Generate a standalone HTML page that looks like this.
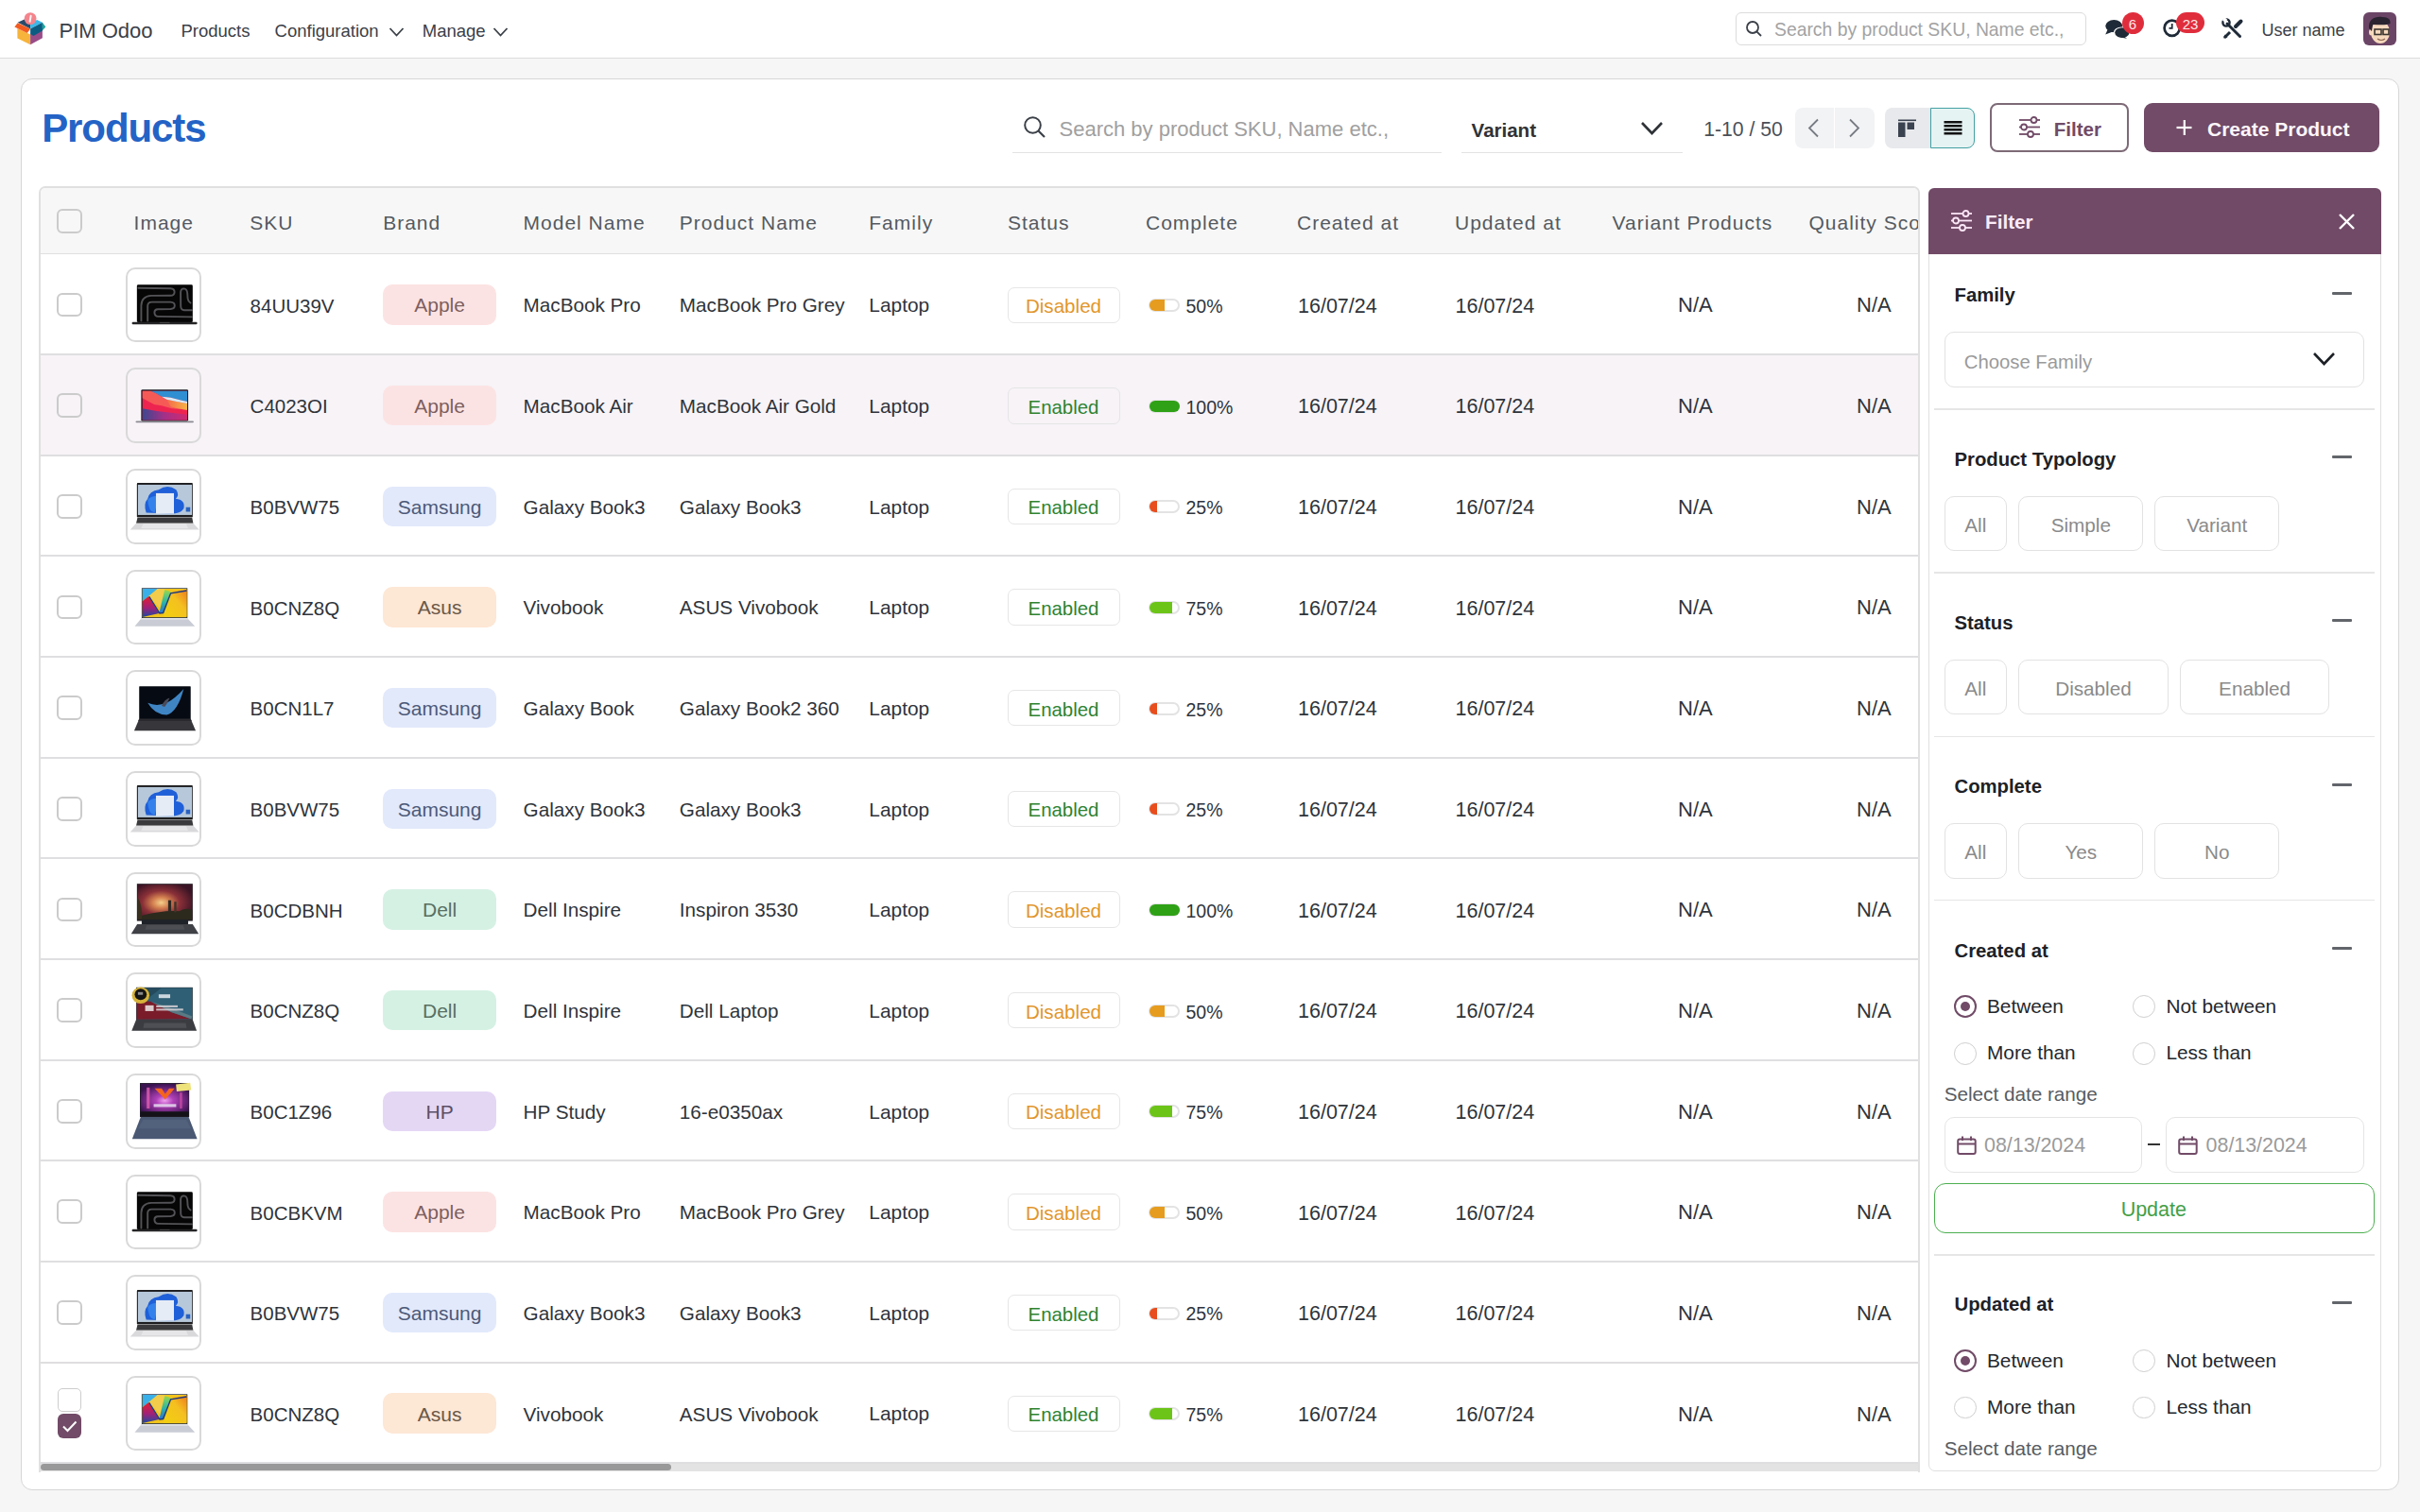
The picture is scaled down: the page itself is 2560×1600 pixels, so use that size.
<!DOCTYPE html>
<html><head><meta charset="utf-8"><title>PIM Odoo - Products</title>
<style>
html,body{margin:0;padding:0;width:2560px;height:1600px;overflow:hidden;background:#f6f6f6;font-family:"Liberation Sans",sans-serif;}
.t{position:absolute;white-space:nowrap;}
svg{overflow:visible}
@media (max-width:2000px){body{zoom:0.5}}
</style></head><body>
<div style="position:absolute;left:0.00px;top:0.00px;width:2560.00px;height:61.50px;box-sizing:border-box;background:#fff;border-bottom:1.5px solid #dcdcdc"></div>
<svg style="position:absolute;left:14.00px;top:11.00px" width="36" height="38" viewBox="0 0 36 38">
<polygon points="4.7,12.7 12.3,9.2 18.1,11.5 18.1,19.4" fill="#2b4a6a"/>
<polygon points="18.1,14 25.1,10.1 30.9,12.7 18.1,19.4" fill="#3cb9ea"/>
<polygon points="4.4,19 18.1,25.5 18.1,36.2 4.4,29.6" fill="#f6b43c"/>
<polygon points="18.1,25 30.9,18.5 30.9,29.3 18.1,36.2" fill="#9a4c88"/>
<polygon points="18.1,19.4 30.9,12.7 30.9,21.5 21.5,27 18.1,25" fill="#0c5c82"/>
<polygon points="30.9,12.7 34.3,17.4 30.9,21.3" fill="#18a79c"/>
<polygon points="4.7,13.2 18.1,19.6 14.8,23.9 1.4,17.4" fill="#f25c22"/>
<circle cx="18.1" cy="8.6" r="6.4" fill="#f4848c"/>
<rect x="17.1" y="4.8" width="2" height="8" rx="1" fill="#fff" opacity=".9" transform="rotate(10 18.1 8.8)"/>
</svg>
<div class="t" style="left:62.50px;top:21.58px;font-size:22px;line-height:22px;color:#3b4048;">PIM Odoo</div>
<div class="t" style="left:191.40px;top:23.54px;font-size:18.5px;line-height:18.5px;color:#3b4048;">Products</div>
<div class="t" style="left:290.60px;top:23.54px;font-size:18.5px;line-height:18.5px;color:#3b4048;">Configuration</div>
<svg style="position:absolute;left:411.00px;top:28.00px" width="17" height="12" viewBox="0 0 17 12"><polyline points="1.5,2 8.5,9.5 15.5,2" fill="none" stroke="#3b4048" stroke-width="1.8"/></svg>
<div class="t" style="left:446.80px;top:23.54px;font-size:18.5px;line-height:18.5px;color:#3b4048;">Manage</div>
<svg style="position:absolute;left:521.00px;top:28.00px" width="17" height="12" viewBox="0 0 17 12"><polyline points="1.5,2 8.5,9.5 15.5,2" fill="none" stroke="#3b4048" stroke-width="1.8"/></svg>
<div style="position:absolute;left:1836.00px;top:13.30px;width:370.50px;height:34.40px;box-sizing:border-box;border:1.5px solid #dcdcdc;border-radius:6px;background:#fff"></div>
<svg style="position:absolute;left:1846.00px;top:21.00px" width="20" height="20" viewBox="0 0 20 20"><circle cx="8" cy="8" r="6" fill="none" stroke="#3b4048" stroke-width="1.8"/><line x1="12.3" y1="12.3" x2="17" y2="17" stroke="#3b4048" stroke-width="1.8"/></svg>
<div class="t" style="left:1877.00px;top:22.12px;font-size:19.35px;line-height:19.35px;color:#a3a3a3;">Search by product SKU, Name etc.,</div>
<svg style="position:absolute;left:2225.00px;top:18.00px" width="30" height="26" viewBox="0 0 30 26">
<ellipse cx="11.3" cy="9.6" rx="9" ry="6.6" fill="#1f2a38"/>
<polygon points="4.5,13.5 2.2,18.6 10,15.6" fill="#1f2a38"/>
<ellipse cx="19.5" cy="16.6" rx="8.8" ry="6.2" fill="#fff"/>
<ellipse cx="19.8" cy="16.6" rx="7.6" ry="5.3" fill="#1f2a38"/>
<polygon points="22,20.5 25,22.8 17.5,21.5" fill="#1f2a38"/>
</svg>
<div style="position:absolute;left:2244.60px;top:12.80px;width:23.00px;height:23.00px;box-sizing:border-box;background:#e02d3c;border-radius:12px"></div>
<div class="t" style="left:2251.84px;top:17.80px;font-size:15px;line-height:15px;color:#fde8ea;">6</div>
<svg style="position:absolute;left:2286.00px;top:18.00px" width="24" height="24" viewBox="0 0 24 24"><circle cx="11.7" cy="11.8" r="8.1" fill="none" stroke="#1f2a38" stroke-width="2.7"/><polyline points="11.7,7 11.7,11.8 8.5,11.8" fill="none" stroke="#1f2a38" stroke-width="1.8"/></svg>
<div style="position:absolute;left:2302.30px;top:13.00px;width:29.40px;height:22.10px;box-sizing:border-box;background:#e02d3c;border-radius:12px"></div>
<div class="t" style="left:2308.68px;top:17.60px;font-size:15px;line-height:15px;color:#fde8ea;">23</div>
<svg style="position:absolute;left:2350.00px;top:19.00px" width="24" height="24" viewBox="0 0 24 24">
<line x1="6" y1="6" x2="19.5" y2="19.5" stroke="#1f2a38" stroke-width="3" stroke-linecap="round"/>
<circle cx="5" cy="5" r="3.6" fill="none" stroke="#1f2a38" stroke-width="2.4"/>
<rect x="1.5" y="0" width="4" height="4" fill="#fff" transform="rotate(45 3.5 2)"/>
<line x1="3" y1="21" x2="9" y2="15" stroke="#1f2a38" stroke-width="3"/>
<polygon points="2.2,21.5 3.5,17.5 6.5,20.5" fill="#1f2a38"/>
<line x1="15" y1="9" x2="20.5" y2="3.5" stroke="#1f2a38" stroke-width="4" stroke-linecap="round"/>
</svg>
<div class="t" style="left:2392.50px;top:23.36px;font-size:18px;line-height:18px;color:#3b4048;">User name</div>
<svg style="position:absolute;left:2500.00px;top:13.00px" width="35" height="35" viewBox="0 0 35 35">
<defs><clipPath id="av"><rect width="35" height="35" rx="6"/></clipPath></defs>
<g clip-path="url(#av)">
<rect width="35" height="35" fill="#6b4566"/>
<ellipse cx="18" cy="21" rx="10" ry="12" fill="#f6d9bd"/>
<ellipse cx="8.5" cy="21" rx="2.5" ry="3.5" fill="#f6d9bd"/>
<path d="M6,17 C5,7 13,4 20,5 C27,5 29,8 28.5,12 C24,14 16,13 10,13 L9,20 Z" fill="#2a2430"/>
<rect x="12" y="18" width="7" height="5.5" fill="none" stroke="#3a3530" stroke-width="1.6"/>
<rect x="21" y="18" width="6" height="5.5" fill="none" stroke="#3a3530" stroke-width="1.6"/>
<path d="M15,28 Q19,31 23,28" fill="none" stroke="#8a6650" stroke-width="1.2"/>
</g>
</svg>
<div style="position:absolute;left:21.50px;top:82.80px;width:2516.70px;height:1494.20px;box-sizing:border-box;background:#fff;border:1.5px solid #d6d6d6;border-radius:12px"></div>
<div class="t" style="left:44.20px;top:115.25px;font-size:42px;line-height:42px;color:#2463c6;font-weight:700;letter-spacing:-1.1px;">Products</div>
<div style="position:absolute;left:1071.00px;top:160.50px;width:454.00px;height:1.50px;box-sizing:border-box;background:#e3e3e3"></div>
<svg style="position:absolute;left:1081.00px;top:121.00px" width="28" height="28" viewBox="0 0 28 28"><circle cx="11.5" cy="11.5" r="8.3" fill="none" stroke="#3b4048" stroke-width="2"/><line x1="17.5" y1="17.5" x2="24" y2="24" stroke="#3b4048" stroke-width="2.2"/></svg>
<div class="t" style="left:1120.50px;top:126.48px;font-size:22px;line-height:22px;color:#a0a0a0;">Search by product SKU, Name etc.,</div>
<div style="position:absolute;left:1546.00px;top:160.50px;width:234.00px;height:1.50px;box-sizing:border-box;background:#e3e3e3"></div>
<div class="t" style="left:1556.60px;top:127.65px;font-size:20.5px;line-height:20.5px;color:#2f3338;font-weight:700;">Variant</div>
<svg style="position:absolute;left:1734.00px;top:127.00px" width="28" height="18" viewBox="0 0 28 18"><polyline points="3,3 13.5,14 24,3" fill="none" stroke="#2f3338" stroke-width="2.6"/></svg>
<div class="t" style="left:1802.20px;top:126.25px;font-size:21.2px;line-height:21.2px;color:#4a4f57;">1-10 / 50</div>
<div style="position:absolute;left:1898.60px;top:114.00px;width:41.40px;height:43.00px;box-sizing:border-box;background:#f2f3f5;border-radius:8px 0 0 8px"></div>
<div style="position:absolute;left:1941.00px;top:114.00px;width:42.40px;height:43.00px;box-sizing:border-box;background:#f2f3f5;border-radius:0 8px 8px 0"></div>
<svg style="position:absolute;left:1910.00px;top:124.00px" width="18" height="24" viewBox="0 0 18 24"><polyline points="13,2.5 4,11.5 13,20.5" fill="none" stroke="#777b82" stroke-width="1.8"/></svg>
<svg style="position:absolute;left:1953.00px;top:124.00px" width="18" height="24" viewBox="0 0 18 24"><polyline points="4,2.5 13,11.5 4,20.5" fill="none" stroke="#777b82" stroke-width="1.8"/></svg>
<div style="position:absolute;left:1993.70px;top:114.00px;width:49.30px;height:43.00px;box-sizing:border-box;background:#e8e9ec;border-radius:8px 0 0 8px"></div>
<div style="position:absolute;left:2042.00px;top:114.00px;width:47.00px;height:43.00px;box-sizing:border-box;background:#e6f3f3;border:1.8px solid #42a0a2;border-radius:0 8px 8px 0"></div>
<svg style="position:absolute;left:2006.00px;top:125.00px" width="22" height="22" viewBox="0 0 22 22"><rect x="2" y="1.5" width="19" height="1.6" fill="#3b4250"/><rect x="2" y="4.5" width="7.5" height="15.5" fill="#3b4250"/><rect x="11.5" y="4.5" width="7.5" height="7.5" fill="#3b4250"/></svg>
<svg style="position:absolute;left:2055.00px;top:126.00px" width="22" height="18" viewBox="0 0 22 18"><rect x="1.5" y="2" width="19" height="2.5" fill="#111"/><rect x="1.5" y="6" width="19" height="2.5" fill="#111"/><rect x="1.5" y="10" width="19" height="2.5" fill="#111"/><rect x="1.5" y="14" width="19" height="2.5" fill="#111"/></svg>
<div style="position:absolute;left:2105.40px;top:108.70px;width:146.30px;height:52.80px;box-sizing:border-box;border:2px solid #7d6a77;border-radius:8px;background:#fff"></div>
<svg style="position:absolute;left:2136.00px;top:122.00px" width="22" height="26" viewBox="0 0 22 26"><line x1="0" y1="5" x2="22" y2="5" stroke="#714b67" stroke-width="1.8"/><circle cx="15.5" cy="5" r="3" fill="#fff" stroke="#714b67" stroke-width="1.8"/>
<line x1="0" y1="12.5" x2="22" y2="12.5" stroke="#714b67" stroke-width="1.8"/><circle cx="5" cy="12.5" r="3" fill="#fff" stroke="#714b67" stroke-width="1.8"/>
<line x1="0" y1="20" x2="22" y2="20" stroke="#714b67" stroke-width="1.8"/><circle cx="12" cy="20" r="3" fill="#fff" stroke="#714b67" stroke-width="1.8"/></svg>
<div class="t" style="left:2172.80px;top:126.85px;font-size:20.5px;line-height:20.5px;color:#714b67;font-weight:700;">Filter</div>
<div style="position:absolute;left:2268.00px;top:108.70px;width:248.80px;height:52.80px;box-sizing:border-box;background:#714b67;border-radius:9px"></div>
<svg style="position:absolute;left:2301.00px;top:125.00px" width="20" height="20" viewBox="0 0 20 20"><rect x="8.7" y="2" width="2.2" height="16" fill="#fff"/><rect x="1.5" y="8.9" width="16" height="2.2" fill="#fff"/></svg>
<div class="t" style="left:2335.00px;top:126.42px;font-size:21px;line-height:21px;color:#fdf6fb;font-weight:700;">Create Product</div>
<div style="position:absolute;left:41px;top:197px;width:1990px;height:1361px;box-sizing:border-box;border:2px solid #e0e0e0;border-bottom:none;border-radius:7px 7px 0 0;overflow:hidden;background:#fff">
<div style="position:absolute;left:-43px;top:-199px;width:2560px;height:1600px">
<div style="position:absolute;left:0.00px;top:197.00px;width:2560.00px;height:72.30px;box-sizing:border-box;background:#f7f7f7;border-bottom:1.6px solid #e0e0e0"></div>
<div style="position:absolute;left:60.30px;top:220.70px;width:26.30px;height:26.30px;box-sizing:border-box;border:2px solid #cbcbcb;border-radius:6px"></div>
<div class="t" style="left:141.60px;top:225.12px;font-size:21px;line-height:21px;color:#545a60;letter-spacing:1px;">Image</div>
<div class="t" style="left:264.30px;top:225.12px;font-size:21px;line-height:21px;color:#545a60;letter-spacing:1px;">SKU</div>
<div class="t" style="left:405.20px;top:225.12px;font-size:21px;line-height:21px;color:#545a60;letter-spacing:1px;">Brand</div>
<div class="t" style="left:553.60px;top:225.12px;font-size:21px;line-height:21px;color:#545a60;letter-spacing:1px;">Model Name</div>
<div class="t" style="left:718.80px;top:225.12px;font-size:21px;line-height:21px;color:#545a60;letter-spacing:1px;">Product Name</div>
<div class="t" style="left:919.30px;top:225.12px;font-size:21px;line-height:21px;color:#545a60;letter-spacing:1px;">Family</div>
<div class="t" style="left:1066.00px;top:225.12px;font-size:21px;line-height:21px;color:#545a60;letter-spacing:1px;">Status</div>
<div class="t" style="left:1212.00px;top:225.12px;font-size:21px;line-height:21px;color:#545a60;letter-spacing:1px;">Complete</div>
<div class="t" style="left:1372.00px;top:225.12px;font-size:21px;line-height:21px;color:#545a60;letter-spacing:1px;">Created at</div>
<div class="t" style="left:1539.00px;top:225.12px;font-size:21px;line-height:21px;color:#545a60;letter-spacing:1px;">Updated at</div>
<div class="t" style="left:1705.60px;top:225.12px;font-size:21px;line-height:21px;color:#545a60;letter-spacing:1px;">Variant Products</div>
<div class="t" style="left:1913.50px;top:225.12px;font-size:21px;line-height:21px;color:#545a60;letter-spacing:1px;">Quality Score</div>
<div style="position:absolute;left:0.00px;top:269.50px;width:2560.00px;height:106.65px;box-sizing:border-box;background:#fff;border-bottom:2px solid #dfdee0"></div>
<div style="position:absolute;left:60.30px;top:309.60px;width:26.30px;height:25.90px;box-sizing:border-box;border:2px solid #cbcbcb;border-radius:6px;background:transparent"></div>
<div style="position:absolute;left:133.30px;top:282.80px;width:79.50px;height:79.50px;box-sizing:border-box;border:2px solid #d9d9d9;border-radius:10px;background:#fff"></div>
<svg style="position:absolute;left:133.60px;top:283.00px" width="79" height="79" viewBox="0 0 79 79">
<rect x="10.85" y="18.25" width="58.99" height="39.79" rx="1.4" fill="#060606"/>
<g fill="none" stroke="#58585c" stroke-width="1.9" stroke-linecap="round" opacity=".95">
<path d="M12.4,21.8 L46.4,22.2 Q50.6,22.4 50.6,26 Q50.6,29.8 46.2,29.8 L26,29.9 Q15.6,30.4 15.4,40.5 L15.4,56.5"/>
<path d="M22.2,56.5 L22.2,40.4 Q22.4,36.6 26.6,36.6 L46.4,36.6 Q50.8,36.8 50.8,40.2 Q50.8,43.8 46.4,44 L32.8,44.3 Q29.4,44.4 29.4,47.8 Q29.6,51.8 33.2,51.9 L69,52.4"/>
<path d="M69,45.2 L61,45.2 Q57.3,45 57.2,41 L57.1,26.4 Q57.3,22.4 60.5,22.4 Q63.7,22.6 64.2,27 L64.6,32.8 Q65,36 67.5,37.5"/>
</g>
<rect x="5.56" y="57.78" width="69.05" height="2.54" rx="1.2" fill="#252527"/>
<rect x="34.92" y="57.94" width="10.58" height="0.74" fill="#555"/>
</svg>
<div class="t" style="left:264.60px;top:313.65px;font-size:20.5px;line-height:20.5px;color:#2f343a;">84UU39V</div>
<div style="position:absolute;left:405.20px;top:301.30px;width:119.80px;height:42.50px;box-sizing:border-box;background:#fce3e3;border-radius:10px"></div>
<div class="t" style="left:438.22px;top:312.42px;font-size:21px;line-height:21px;color:#7d5f60;">Apple</div>
<div class="t" style="left:553.60px;top:313.48px;font-size:20.7px;line-height:20.7px;color:#2f343a;">MacBook Pro</div>
<div class="t" style="left:718.80px;top:313.48px;font-size:20.7px;line-height:20.7px;color:#2f343a;">MacBook Pro Grey</div>
<div class="t" style="left:919.30px;top:313.31px;font-size:20.9px;line-height:20.9px;color:#2f343a;">Laptop</div>
<div style="position:absolute;left:1065.50px;top:303.50px;width:119.00px;height:38.40px;box-sizing:border-box;border:1.8px solid #e6e6e6;border-radius:7px;background:transparent"></div>
<div class="t" style="left:1084.93px;top:313.96px;font-size:20.6px;line-height:20.6px;color:#e2962a;">Disabled</div>
<div style="position:absolute;left:1215.00px;top:316.10px;width:33.30px;height:14.10px;box-sizing:border-box;border:2px solid #e3e3e3;border-radius:7px;background:#fff"></div>
<div style="position:absolute;left:1215.50px;top:317.10px;width:16.65px;height:12.00px;box-sizing:border-box;background:#e69c1e;border-radius:6px 0 0 6px"></div>
<div class="t" style="left:1254.50px;top:314.99px;font-size:19.5px;line-height:19.5px;color:#2f343a;">50%</div>
<div class="t" style="left:1373.00px;top:313.80px;font-size:21.5px;line-height:21.5px;color:#2f343a;">16/07/24</div>
<div class="t" style="left:1539.50px;top:313.80px;font-size:21.5px;line-height:21.5px;color:#2f343a;">16/07/24</div>
<div class="t" style="left:1775.00px;top:312.38px;font-size:22px;line-height:22px;color:#2f343a;">N/A</div>
<div class="t" style="left:1964.00px;top:312.38px;font-size:22px;line-height:22px;color:#2f343a;">N/A</div>
<div style="position:absolute;left:0.00px;top:376.15px;width:2560.00px;height:106.65px;box-sizing:border-box;background:#f7f3f7;border-bottom:2px solid #dfdee0"></div>
<div style="position:absolute;left:60.30px;top:416.25px;width:26.30px;height:25.90px;box-sizing:border-box;border:2px solid #cbcbcb;border-radius:6px;background:transparent"></div>
<div style="position:absolute;left:133.30px;top:389.45px;width:79.50px;height:79.50px;box-sizing:border-box;border:2px solid #d9d9d9;border-radius:10px;background:#f7f3f7"></div>
<svg style="position:absolute;left:133.60px;top:389.65px" width="79" height="79" viewBox="0 0 79 79">
<defs>
<linearGradient id="mbaB" x1="0" y1="0" x2="1" y2="0"><stop offset="0" stop-color="#3d4790"/><stop offset=".5" stop-color="#a53088"/><stop offset="1" stop-color="#d02a70"/></linearGradient>
<linearGradient id="mbaO" x1="0" y1="0" x2="1" y2="0"><stop offset="0" stop-color="#f46a4a"/><stop offset="1" stop-color="#f6b446"/></linearGradient>
</defs>
<rect x="15.34" y="22.22" width="49.74" height="33.44" rx="1.4" fill="#1b1b22"/>
<polygon points="16.72,23.81 64.02,23.81 64.02,54.50 16.72,54.50" fill="#ee2450"/>
<polygon points="16.72,23.81 25.40,23.81 31.75,26.46 37.04,29.63 42.33,32.80 52.91,34.92 64.02,37.04 64.02,43.39 47.62,42.33 37.04,39.15 29.10,38.10 17.46,31.75 16.72,31.22" fill="#f65a56"/>
<polygon points="42.33,32.80 52.91,34.92 64.02,37.04 64.02,43.92 51.85,41.80 46.56,40.21" fill="url(#mbaO)"/>
<polygon points="25.40,23.81 64.02,23.81 64.02,34.92 58.20,33.86 46.56,30.69 37.04,29.63 31.75,26.46" fill="#2f8fd2"/>
<polygon points="37.04,29.63 46.56,30.69 58.20,33.86 64.02,34.92 64.02,37.04 52.91,34.92 42.33,32.80" fill="#d8ecf8"/>
<polygon points="16.72,42.33 31.75,44.97 44.97,46.56 64.02,48.68 64.02,54.50 16.72,54.50" fill="url(#mbaB)"/>
<rect x="9.52" y="55.45" width="61.38" height="1.80" rx="0.9" fill="#8c8b92"/>
</svg>
<div class="t" style="left:264.60px;top:420.30px;font-size:20.5px;line-height:20.5px;color:#2f343a;">C4023OI</div>
<div style="position:absolute;left:405.20px;top:407.95px;width:119.80px;height:42.50px;box-sizing:border-box;background:#fce3e3;border-radius:10px"></div>
<div class="t" style="left:438.22px;top:419.07px;font-size:21px;line-height:21px;color:#7d5f60;">Apple</div>
<div class="t" style="left:553.60px;top:420.13px;font-size:20.7px;line-height:20.7px;color:#2f343a;">MacBook Air</div>
<div class="t" style="left:718.80px;top:420.13px;font-size:20.7px;line-height:20.7px;color:#2f343a;">MacBook Air Gold</div>
<div class="t" style="left:919.30px;top:419.96px;font-size:20.9px;line-height:20.9px;color:#2f343a;">Laptop</div>
<div style="position:absolute;left:1065.50px;top:410.15px;width:119.00px;height:38.40px;box-sizing:border-box;border:1.8px solid #e6e6e6;border-radius:7px;background:transparent"></div>
<div class="t" style="left:1087.57px;top:420.78px;font-size:20.4px;line-height:20.4px;color:#2e8331;">Enabled</div>
<div style="position:absolute;left:1215.00px;top:422.75px;width:33.30px;height:14.10px;box-sizing:border-box;border:2px solid #e3e3e3;border-radius:7px;background:#fff"></div>
<div style="position:absolute;left:1215.50px;top:423.75px;width:32.80px;height:12.00px;box-sizing:border-box;background:#2fa116;border-radius:7px"></div>
<div class="t" style="left:1254.50px;top:421.64px;font-size:19.5px;line-height:19.5px;color:#2f343a;">100%</div>
<div class="t" style="left:1373.00px;top:420.45px;font-size:21.5px;line-height:21.5px;color:#2f343a;">16/07/24</div>
<div class="t" style="left:1539.50px;top:420.45px;font-size:21.5px;line-height:21.5px;color:#2f343a;">16/07/24</div>
<div class="t" style="left:1775.00px;top:419.03px;font-size:22px;line-height:22px;color:#2f343a;">N/A</div>
<div class="t" style="left:1964.00px;top:419.03px;font-size:22px;line-height:22px;color:#2f343a;">N/A</div>
<div style="position:absolute;left:0.00px;top:482.80px;width:2560.00px;height:106.65px;box-sizing:border-box;background:#fff;border-bottom:2px solid #dfdee0"></div>
<div style="position:absolute;left:60.30px;top:522.90px;width:26.30px;height:25.90px;box-sizing:border-box;border:2px solid #cbcbcb;border-radius:6px;background:transparent"></div>
<div style="position:absolute;left:133.30px;top:496.10px;width:79.50px;height:79.50px;box-sizing:border-box;border:2px solid #d9d9d9;border-radius:10px;background:#fff"></div>
<svg style="position:absolute;left:133.60px;top:496.30px" width="79" height="79" viewBox="0 0 79 79">
<rect x="10.85" y="15.08" width="58.99" height="36.51" rx="0.8" fill="#1d1d1f"/>
<rect x="11.90" y="16.93" width="57.14" height="32.01" fill="#b6c8da"/>
<path d="M20.63,46.56 Q17.46,37.04 22.22,31.75 Q23.81,23.28 33.86,22.22 Q43.39,15.87 52.38,22.22 Q56.08,28.04 51.85,31.75 Q62.43,32.80 60.32,42.33 Q57.14,47.62 46.56,47.62 Z" fill="#1f5fd8"/>
<path d="M22.22,32.80 Q27.51,27.51 33.86,29.63 L29.63,46.56 Q22.75,45.50 22.22,32.80 Z" fill="#3a8af0" opacity=".8"/>
<rect x="30.95" y="25.93" width="19.05" height="21.69" fill="#e6ecf6"/>
<rect x="62.70" y="40.74" width="4.50" height="4.76" fill="#2a62c0"/>
<polygon points="11.38,52.12 69.31,52.12 70.37,57.67 10.05,57.67" fill="#3a3a3c"/>
<polygon points="10.05,57.67 70.37,57.67 76.72,64.55 3.70,64.55" fill="#d9d9dc"/>
<polygon points="17.46,58.20 62.96,58.20 65.08,62.96 15.34,62.96" fill="#e6e6e8"/>
</svg>
<div class="t" style="left:264.60px;top:526.95px;font-size:20.5px;line-height:20.5px;color:#2f343a;">B0BVW75</div>
<div style="position:absolute;left:405.20px;top:514.60px;width:119.80px;height:42.50px;box-sizing:border-box;background:#e2e9fb;border-radius:10px"></div>
<div class="t" style="left:420.74px;top:525.72px;font-size:21px;line-height:21px;color:#4d5a78;">Samsung</div>
<div class="t" style="left:553.60px;top:526.78px;font-size:20.7px;line-height:20.7px;color:#2f343a;">Galaxy Book3</div>
<div class="t" style="left:718.80px;top:526.78px;font-size:20.7px;line-height:20.7px;color:#2f343a;">Galaxy Book3</div>
<div class="t" style="left:919.30px;top:526.61px;font-size:20.9px;line-height:20.9px;color:#2f343a;">Laptop</div>
<div style="position:absolute;left:1065.50px;top:516.80px;width:119.00px;height:38.40px;box-sizing:border-box;border:1.8px solid #e6e6e6;border-radius:7px;background:transparent"></div>
<div class="t" style="left:1087.57px;top:527.43px;font-size:20.4px;line-height:20.4px;color:#2e8331;">Enabled</div>
<div style="position:absolute;left:1215.00px;top:529.40px;width:33.30px;height:14.10px;box-sizing:border-box;border:2px solid #e3e3e3;border-radius:7px;background:#fff"></div>
<div style="position:absolute;left:1215.50px;top:530.40px;width:8.33px;height:12.00px;box-sizing:border-box;background:#e84d1d;border-radius:6px 0 0 6px"></div>
<div class="t" style="left:1254.50px;top:528.29px;font-size:19.5px;line-height:19.5px;color:#2f343a;">25%</div>
<div class="t" style="left:1373.00px;top:527.10px;font-size:21.5px;line-height:21.5px;color:#2f343a;">16/07/24</div>
<div class="t" style="left:1539.50px;top:527.10px;font-size:21.5px;line-height:21.5px;color:#2f343a;">16/07/24</div>
<div class="t" style="left:1775.00px;top:525.68px;font-size:22px;line-height:22px;color:#2f343a;">N/A</div>
<div class="t" style="left:1964.00px;top:525.68px;font-size:22px;line-height:22px;color:#2f343a;">N/A</div>
<div style="position:absolute;left:0.00px;top:589.45px;width:2560.00px;height:106.65px;box-sizing:border-box;background:#fff;border-bottom:2px solid #dfdee0"></div>
<div style="position:absolute;left:60.30px;top:629.55px;width:26.30px;height:25.90px;box-sizing:border-box;border:2px solid #cbcbcb;border-radius:6px;background:transparent"></div>
<div style="position:absolute;left:133.30px;top:602.75px;width:79.50px;height:79.50px;box-sizing:border-box;border:2px solid #d9d9d9;border-radius:10px;background:#fff"></div>
<svg style="position:absolute;left:133.60px;top:602.95px" width="79" height="79" viewBox="0 0 79 79">
<defs>
<linearGradient id="vRed" x1="0" y1="0" x2="0" y2="1"><stop offset="0" stop-color="#e81c2a"/><stop offset=".55" stop-color="#a0207a"/><stop offset="1" stop-color="#1e4aa0"/></linearGradient>
<linearGradient id="vGrn" x1="0" y1="0" x2="0" y2="1"><stop offset="0" stop-color="#9ad84a"/><stop offset=".5" stop-color="#30b8a0"/><stop offset="1" stop-color="#2a70d0"/></linearGradient>
<linearGradient id="vYel" x1="1" y1="0" x2="0" y2="1"><stop offset="0" stop-color="#f07a1e"/><stop offset=".4" stop-color="#f4c020"/><stop offset="1" stop-color="#f2d00e"/></linearGradient>
</defs>
<rect x="15.87" y="19.31" width="48.41" height="31.75" fill="#1d2a40"/>
<polygon points="16.72,20.11 63.49,20.11 63.49,50.26 16.72,50.26" fill="#f2c41a"/>
<polygon points="16.72,20.11 32.80,20.11 23.28,28.04 16.72,33.33" fill="#3ab0ea"/>
<polygon points="23.28,28.04 32.80,20.11 41.27,20.63 34.92,40.21" fill="#f2cc4a"/>
<polygon points="16.72,33.33 23.28,28.04 34.39,46.03 16.72,50.00" fill="url(#vRed)"/>
<polygon points="40.21,20.90 48.15,23.81 39.15,45.50 34.39,46.03" fill="url(#vGrn)"/>
<polygon points="46.56,23.28 63.49,20.90 63.49,49.47 39.68,50.00 38.89,44.97" fill="url(#vYel)"/>
<polyline points="23.81,28.31 34.92,46.03 38.62,45.50 46.56,24.87 63.49,21.96" fill="none" stroke="#1b3a80" stroke-width="1.4"/>
<polygon points="15.87,51.06 64.02,51.06 72.22,59.79 8.47,59.79" fill="#c9ccd4"/>
<polygon points="15.87,51.06 64.02,51.06 65.08,52.65 14.81,52.65" fill="#dfe2e8"/>
</svg>
<div class="t" style="left:264.60px;top:633.60px;font-size:20.5px;line-height:20.5px;color:#2f343a;">B0CNZ8Q</div>
<div style="position:absolute;left:405.20px;top:621.25px;width:119.80px;height:42.50px;box-sizing:border-box;background:#fde7d5;border-radius:10px"></div>
<div class="t" style="left:441.74px;top:632.37px;font-size:21px;line-height:21px;color:#6b5847;">Asus</div>
<div class="t" style="left:553.60px;top:633.43px;font-size:20.7px;line-height:20.7px;color:#2f343a;">Vivobook</div>
<div class="t" style="left:718.80px;top:633.43px;font-size:20.7px;line-height:20.7px;color:#2f343a;">ASUS Vivobook</div>
<div class="t" style="left:919.30px;top:633.26px;font-size:20.9px;line-height:20.9px;color:#2f343a;">Laptop</div>
<div style="position:absolute;left:1065.50px;top:623.45px;width:119.00px;height:38.40px;box-sizing:border-box;border:1.8px solid #e6e6e6;border-radius:7px;background:transparent"></div>
<div class="t" style="left:1087.57px;top:634.08px;font-size:20.4px;line-height:20.4px;color:#2e8331;">Enabled</div>
<div style="position:absolute;left:1215.00px;top:636.05px;width:33.30px;height:14.10px;box-sizing:border-box;border:2px solid #e3e3e3;border-radius:7px;background:#fff"></div>
<div style="position:absolute;left:1215.50px;top:637.05px;width:24.97px;height:12.00px;box-sizing:border-box;background:#6cc419;border-radius:6px 0 0 6px"></div>
<div class="t" style="left:1254.50px;top:634.94px;font-size:19.5px;line-height:19.5px;color:#2f343a;">75%</div>
<div class="t" style="left:1373.00px;top:633.75px;font-size:21.5px;line-height:21.5px;color:#2f343a;">16/07/24</div>
<div class="t" style="left:1539.50px;top:633.75px;font-size:21.5px;line-height:21.5px;color:#2f343a;">16/07/24</div>
<div class="t" style="left:1775.00px;top:632.33px;font-size:22px;line-height:22px;color:#2f343a;">N/A</div>
<div class="t" style="left:1964.00px;top:632.33px;font-size:22px;line-height:22px;color:#2f343a;">N/A</div>
<div style="position:absolute;left:0.00px;top:696.10px;width:2560.00px;height:106.65px;box-sizing:border-box;background:#fff;border-bottom:2px solid #dfdee0"></div>
<div style="position:absolute;left:60.30px;top:736.20px;width:26.30px;height:25.90px;box-sizing:border-box;border:2px solid #cbcbcb;border-radius:6px;background:transparent"></div>
<div style="position:absolute;left:133.30px;top:709.40px;width:79.50px;height:79.50px;box-sizing:border-box;border:2px solid #d9d9d9;border-radius:10px;background:#fff"></div>
<svg style="position:absolute;left:133.60px;top:709.60px" width="79" height="79" viewBox="0 0 79 79">
<rect x="13.23" y="16.14" width="54.50" height="34.92" rx="0.6" fill="#060a12"/>
<path d="M22.22,33.86 Q29.63,46.56 42.33,46.56 Q53.97,43.39 60.32,19.05 Q50.79,29.63 42.33,33.86 Q31.75,38.10 22.22,33.86 Z" fill="#3f85c4"/>
<path d="M37.04,37.04 Q40.21,29.63 45.50,28.57 Q43.39,33.86 40.21,38.10 Z" fill="#4a4a58"/>
<polygon points="13.23,50.79 67.72,50.79 73.02,63.23 7.94,63.23" fill="#37373b"/>
<polygon points="13.23,50.79 67.72,50.79 68.78,52.91 12.17,52.91" fill="#2a2a2e"/>
</svg>
<div class="t" style="left:264.60px;top:740.25px;font-size:20.5px;line-height:20.5px;color:#2f343a;">B0CN1L7</div>
<div style="position:absolute;left:405.20px;top:727.90px;width:119.80px;height:42.50px;box-sizing:border-box;background:#e2e9fb;border-radius:10px"></div>
<div class="t" style="left:420.74px;top:739.02px;font-size:21px;line-height:21px;color:#4d5a78;">Samsung</div>
<div class="t" style="left:553.60px;top:740.08px;font-size:20.7px;line-height:20.7px;color:#2f343a;">Galaxy Book</div>
<div class="t" style="left:718.80px;top:740.08px;font-size:20.7px;line-height:20.7px;color:#2f343a;">Galaxy Book2 360</div>
<div class="t" style="left:919.30px;top:739.91px;font-size:20.9px;line-height:20.9px;color:#2f343a;">Laptop</div>
<div style="position:absolute;left:1065.50px;top:730.10px;width:119.00px;height:38.40px;box-sizing:border-box;border:1.8px solid #e6e6e6;border-radius:7px;background:transparent"></div>
<div class="t" style="left:1087.57px;top:740.73px;font-size:20.4px;line-height:20.4px;color:#2e8331;">Enabled</div>
<div style="position:absolute;left:1215.00px;top:742.70px;width:33.30px;height:14.10px;box-sizing:border-box;border:2px solid #e3e3e3;border-radius:7px;background:#fff"></div>
<div style="position:absolute;left:1215.50px;top:743.70px;width:8.33px;height:12.00px;box-sizing:border-box;background:#e84d1d;border-radius:6px 0 0 6px"></div>
<div class="t" style="left:1254.50px;top:741.59px;font-size:19.5px;line-height:19.5px;color:#2f343a;">25%</div>
<div class="t" style="left:1373.00px;top:740.40px;font-size:21.5px;line-height:21.5px;color:#2f343a;">16/07/24</div>
<div class="t" style="left:1539.50px;top:740.40px;font-size:21.5px;line-height:21.5px;color:#2f343a;">16/07/24</div>
<div class="t" style="left:1775.00px;top:738.98px;font-size:22px;line-height:22px;color:#2f343a;">N/A</div>
<div class="t" style="left:1964.00px;top:738.98px;font-size:22px;line-height:22px;color:#2f343a;">N/A</div>
<div style="position:absolute;left:0.00px;top:802.75px;width:2560.00px;height:106.65px;box-sizing:border-box;background:#fff;border-bottom:2px solid #dfdee0"></div>
<div style="position:absolute;left:60.30px;top:842.85px;width:26.30px;height:25.90px;box-sizing:border-box;border:2px solid #cbcbcb;border-radius:6px;background:transparent"></div>
<div style="position:absolute;left:133.30px;top:816.05px;width:79.50px;height:79.50px;box-sizing:border-box;border:2px solid #d9d9d9;border-radius:10px;background:#fff"></div>
<svg style="position:absolute;left:133.60px;top:816.25px" width="79" height="79" viewBox="0 0 79 79">
<rect x="10.85" y="15.08" width="58.99" height="36.51" rx="0.8" fill="#1d1d1f"/>
<rect x="11.90" y="16.93" width="57.14" height="32.01" fill="#b6c8da"/>
<path d="M20.63,46.56 Q17.46,37.04 22.22,31.75 Q23.81,23.28 33.86,22.22 Q43.39,15.87 52.38,22.22 Q56.08,28.04 51.85,31.75 Q62.43,32.80 60.32,42.33 Q57.14,47.62 46.56,47.62 Z" fill="#1f5fd8"/>
<path d="M22.22,32.80 Q27.51,27.51 33.86,29.63 L29.63,46.56 Q22.75,45.50 22.22,32.80 Z" fill="#3a8af0" opacity=".8"/>
<rect x="30.95" y="25.93" width="19.05" height="21.69" fill="#e6ecf6"/>
<rect x="62.70" y="40.74" width="4.50" height="4.76" fill="#2a62c0"/>
<polygon points="11.38,52.12 69.31,52.12 70.37,57.67 10.05,57.67" fill="#3a3a3c"/>
<polygon points="10.05,57.67 70.37,57.67 76.72,64.55 3.70,64.55" fill="#d9d9dc"/>
<polygon points="17.46,58.20 62.96,58.20 65.08,62.96 15.34,62.96" fill="#e6e6e8"/>
</svg>
<div class="t" style="left:264.60px;top:846.90px;font-size:20.5px;line-height:20.5px;color:#2f343a;">B0BVW75</div>
<div style="position:absolute;left:405.20px;top:834.55px;width:119.80px;height:42.50px;box-sizing:border-box;background:#e2e9fb;border-radius:10px"></div>
<div class="t" style="left:420.74px;top:845.67px;font-size:21px;line-height:21px;color:#4d5a78;">Samsung</div>
<div class="t" style="left:553.60px;top:846.73px;font-size:20.7px;line-height:20.7px;color:#2f343a;">Galaxy Book3</div>
<div class="t" style="left:718.80px;top:846.73px;font-size:20.7px;line-height:20.7px;color:#2f343a;">Galaxy Book3</div>
<div class="t" style="left:919.30px;top:846.56px;font-size:20.9px;line-height:20.9px;color:#2f343a;">Laptop</div>
<div style="position:absolute;left:1065.50px;top:836.75px;width:119.00px;height:38.40px;box-sizing:border-box;border:1.8px solid #e6e6e6;border-radius:7px;background:transparent"></div>
<div class="t" style="left:1087.57px;top:847.38px;font-size:20.4px;line-height:20.4px;color:#2e8331;">Enabled</div>
<div style="position:absolute;left:1215.00px;top:849.35px;width:33.30px;height:14.10px;box-sizing:border-box;border:2px solid #e3e3e3;border-radius:7px;background:#fff"></div>
<div style="position:absolute;left:1215.50px;top:850.35px;width:8.33px;height:12.00px;box-sizing:border-box;background:#e84d1d;border-radius:6px 0 0 6px"></div>
<div class="t" style="left:1254.50px;top:848.24px;font-size:19.5px;line-height:19.5px;color:#2f343a;">25%</div>
<div class="t" style="left:1373.00px;top:847.05px;font-size:21.5px;line-height:21.5px;color:#2f343a;">16/07/24</div>
<div class="t" style="left:1539.50px;top:847.05px;font-size:21.5px;line-height:21.5px;color:#2f343a;">16/07/24</div>
<div class="t" style="left:1775.00px;top:845.63px;font-size:22px;line-height:22px;color:#2f343a;">N/A</div>
<div class="t" style="left:1964.00px;top:845.63px;font-size:22px;line-height:22px;color:#2f343a;">N/A</div>
<div style="position:absolute;left:0.00px;top:909.40px;width:2560.00px;height:106.65px;box-sizing:border-box;background:#fff;border-bottom:2px solid #dfdee0"></div>
<div style="position:absolute;left:60.30px;top:949.50px;width:26.30px;height:25.90px;box-sizing:border-box;border:2px solid #cbcbcb;border-radius:6px;background:transparent"></div>
<div style="position:absolute;left:133.30px;top:922.70px;width:79.50px;height:79.50px;box-sizing:border-box;border:2px solid #d9d9d9;border-radius:10px;background:#fff"></div>
<svg style="position:absolute;left:133.60px;top:922.90px" width="79" height="79" viewBox="0 0 79 79">
<defs><radialGradient id="d1g" cx=".43" cy=".52" r=".62"><stop offset="0" stop-color="#f4d08a"/><stop offset=".25" stop-color="#d48050"/><stop offset=".55" stop-color="#8a3038"/><stop offset="1" stop-color="#3a1424"/></radialGradient></defs>
<rect x="10.85" y="12.17" width="58.99" height="39.42" fill="#241e24"/>
<rect x="11.64" y="12.96" width="57.67" height="37.04" fill="url(#d1g)"/>
<path d="M11.64,47.62 Q23.81,43.39 34.39,42.33 Q44.97,40.21 55.56,41.27 Q63.49,37.04 69.31,40.21 L69.31,50.00 L11.64,50.00 Z" fill="#2c2a1c"/>
<path d="M11.64,26.46 Q16.93,34.39 15.87,49.74 L11.64,49.74 Z" fill="#3a3020"/>
<rect x="43.92" y="29.63" width="3.17" height="12.70" fill="#2e2a24"/>
<rect x="50.26" y="31.22" width="2.38" height="11.11" fill="#403428"/>
<polygon points="15.87,50.00 65.08,50.00 65.08,55.56 15.87,55.56" fill="#1f2329"/>
<polygon points="11.11,55.03 69.84,55.03 76.19,65.34 4.76,65.34" fill="#3f4147"/>
<polygon points="21.16,56.08 59.79,56.08 61.38,60.85 19.58,60.85" fill="#4c4e54"/>
</svg>
<div class="t" style="left:264.60px;top:953.55px;font-size:20.5px;line-height:20.5px;color:#2f343a;">B0CDBNH</div>
<div style="position:absolute;left:405.20px;top:941.20px;width:119.80px;height:42.50px;box-sizing:border-box;background:#d5f1e4;border-radius:10px"></div>
<div class="t" style="left:446.99px;top:952.32px;font-size:21px;line-height:21px;color:#586f63;">Dell</div>
<div class="t" style="left:553.60px;top:953.38px;font-size:20.7px;line-height:20.7px;color:#2f343a;">Dell Inspire</div>
<div class="t" style="left:718.80px;top:953.38px;font-size:20.7px;line-height:20.7px;color:#2f343a;">Inspiron 3530</div>
<div class="t" style="left:919.30px;top:953.21px;font-size:20.9px;line-height:20.9px;color:#2f343a;">Laptop</div>
<div style="position:absolute;left:1065.50px;top:943.40px;width:119.00px;height:38.40px;box-sizing:border-box;border:1.8px solid #e6e6e6;border-radius:7px;background:transparent"></div>
<div class="t" style="left:1084.93px;top:953.86px;font-size:20.6px;line-height:20.6px;color:#e2962a;">Disabled</div>
<div style="position:absolute;left:1215.00px;top:956.00px;width:33.30px;height:14.10px;box-sizing:border-box;border:2px solid #e3e3e3;border-radius:7px;background:#fff"></div>
<div style="position:absolute;left:1215.50px;top:957.00px;width:32.80px;height:12.00px;box-sizing:border-box;background:#2fa116;border-radius:7px"></div>
<div class="t" style="left:1254.50px;top:954.89px;font-size:19.5px;line-height:19.5px;color:#2f343a;">100%</div>
<div class="t" style="left:1373.00px;top:953.70px;font-size:21.5px;line-height:21.5px;color:#2f343a;">16/07/24</div>
<div class="t" style="left:1539.50px;top:953.70px;font-size:21.5px;line-height:21.5px;color:#2f343a;">16/07/24</div>
<div class="t" style="left:1775.00px;top:952.28px;font-size:22px;line-height:22px;color:#2f343a;">N/A</div>
<div class="t" style="left:1964.00px;top:952.28px;font-size:22px;line-height:22px;color:#2f343a;">N/A</div>
<div style="position:absolute;left:0.00px;top:1016.05px;width:2560.00px;height:106.65px;box-sizing:border-box;background:#fff;border-bottom:2px solid #dfdee0"></div>
<div style="position:absolute;left:60.30px;top:1056.15px;width:26.30px;height:25.90px;box-sizing:border-box;border:2px solid #cbcbcb;border-radius:6px;background:transparent"></div>
<div style="position:absolute;left:133.30px;top:1029.35px;width:79.50px;height:79.50px;box-sizing:border-box;border:2px solid #d9d9d9;border-radius:10px;background:#fff"></div>
<svg style="position:absolute;left:133.60px;top:1029.55px" width="79" height="79" viewBox="0 0 79 79">
<rect x="10.05" y="14.81" width="59.79" height="34.66" fill="#2a2c30"/>
<polygon points="10.58,15.34 69.31,15.34 69.31,48.68 10.58,48.68" fill="#2f5f74"/>
<polygon points="10.58,15.34 37.04,15.34 21.16,27.51 10.58,29.63" fill="#244a5c"/>
<polygon points="10.58,28.57 25.40,29.63 47.62,41.27 68.25,48.15 10.58,48.68" fill="#7a1c2a"/>
<polygon points="25.40,29.63 47.62,41.27 68.25,48.15 69.31,45.50 50.26,38.10" fill="#5a7a84"/>
<rect x="19.58" y="33.86" width="8.99" height="6.08" fill="#e8e0e0" opacity=".9"/>
<rect x="31.22" y="33.86" width="22.75" height="2.12" fill="#d8d4d8" opacity=".85"/>
<rect x="31.22" y="37.30" width="28.57" height="2.12" fill="#d8d4d8" opacity=".85"/>
<rect x="33.86" y="22.22" width="12.17" height="3.97" fill="#dde4ea" opacity=".9"/>
<polygon points="10.05,48.94 69.84,48.94 74.07,60.85 5.29,60.85" fill="#3b3c41"/>
<polygon points="18.52,52.38 62.43,52.38 63.49,57.67 17.46,57.67" fill="#4e4f54"/>
<ellipse cx="14.81" cy="23.28" rx="9.26" ry="8.73" fill="#d6b23a"/>
<ellipse cx="14.81" cy="22.22" rx="6.35" ry="6.08" fill="#141414"/>
<rect x="11.90" y="19.84" width="5.29" height="2.91" fill="#888"/>
</svg>
<div class="t" style="left:264.60px;top:1060.20px;font-size:20.5px;line-height:20.5px;color:#2f343a;">B0CNZ8Q</div>
<div style="position:absolute;left:405.20px;top:1047.85px;width:119.80px;height:42.50px;box-sizing:border-box;background:#d5f1e4;border-radius:10px"></div>
<div class="t" style="left:446.99px;top:1058.97px;font-size:21px;line-height:21px;color:#586f63;">Dell</div>
<div class="t" style="left:553.60px;top:1060.03px;font-size:20.7px;line-height:20.7px;color:#2f343a;">Dell Inspire</div>
<div class="t" style="left:718.80px;top:1060.03px;font-size:20.7px;line-height:20.7px;color:#2f343a;">Dell Laptop</div>
<div class="t" style="left:919.30px;top:1059.86px;font-size:20.9px;line-height:20.9px;color:#2f343a;">Laptop</div>
<div style="position:absolute;left:1065.50px;top:1050.05px;width:119.00px;height:38.40px;box-sizing:border-box;border:1.8px solid #e6e6e6;border-radius:7px;background:transparent"></div>
<div class="t" style="left:1084.93px;top:1060.51px;font-size:20.6px;line-height:20.6px;color:#e2962a;">Disabled</div>
<div style="position:absolute;left:1215.00px;top:1062.65px;width:33.30px;height:14.10px;box-sizing:border-box;border:2px solid #e3e3e3;border-radius:7px;background:#fff"></div>
<div style="position:absolute;left:1215.50px;top:1063.65px;width:16.65px;height:12.00px;box-sizing:border-box;background:#e69c1e;border-radius:6px 0 0 6px"></div>
<div class="t" style="left:1254.50px;top:1061.54px;font-size:19.5px;line-height:19.5px;color:#2f343a;">50%</div>
<div class="t" style="left:1373.00px;top:1060.35px;font-size:21.5px;line-height:21.5px;color:#2f343a;">16/07/24</div>
<div class="t" style="left:1539.50px;top:1060.35px;font-size:21.5px;line-height:21.5px;color:#2f343a;">16/07/24</div>
<div class="t" style="left:1775.00px;top:1058.93px;font-size:22px;line-height:22px;color:#2f343a;">N/A</div>
<div class="t" style="left:1964.00px;top:1058.93px;font-size:22px;line-height:22px;color:#2f343a;">N/A</div>
<div style="position:absolute;left:0.00px;top:1122.70px;width:2560.00px;height:106.65px;box-sizing:border-box;background:#fff;border-bottom:2px solid #dfdee0"></div>
<div style="position:absolute;left:60.30px;top:1162.80px;width:26.30px;height:25.90px;box-sizing:border-box;border:2px solid #cbcbcb;border-radius:6px;background:transparent"></div>
<div style="position:absolute;left:133.30px;top:1136.00px;width:79.50px;height:79.50px;box-sizing:border-box;border:2px solid #d9d9d9;border-radius:10px;background:#fff"></div>
<svg style="position:absolute;left:133.60px;top:1136.20px" width="79" height="79" viewBox="0 0 79 79">
<defs><radialGradient id="hpg" cx=".5" cy=".6" r=".6"><stop offset="0" stop-color="#f0a0f0"/><stop offset=".3" stop-color="#b040b8"/><stop offset="1" stop-color="#3a1250"/></radialGradient></defs>
<rect x="14.02" y="10.05" width="52.12" height="35.98" fill="#1e1a26"/>
<rect x="14.81" y="10.85" width="50.79" height="29.63" fill="url(#hpg)"/>
<rect x="21.16" y="14.81" width="3.17" height="22.22" fill="#e060b0" opacity=".8"/>
<rect x="56.08" y="20.11" width="2.65" height="16.93" fill="#d050a8" opacity=".7"/>
<polygon points="29.63,15.87 37.04,15.87 40.74,21.69 44.97,15.87 50.79,15.87 40.74,27.51" fill="#f4641e"/>
<rect x="28.57" y="32.28" width="23.81" height="3.17" fill="#e6dcf0" opacity=".85"/>
<rect x="14.81" y="40.48" width="50.79" height="4.76" fill="#141218"/>
<polygon points="52.12,11.38 67.20,9.79 68.25,17.46 52.91,19.05" fill="#eee27a"/>
<polygon points="14.81,46.03 65.61,46.03 74.60,69.31 5.82,69.31" fill="#4a5874"/>
<polygon points="17.46,48.68 62.96,48.68 68.25,58.20 12.17,58.20" fill="#52617c"/>
</svg>
<div class="t" style="left:264.60px;top:1166.85px;font-size:20.5px;line-height:20.5px;color:#2f343a;">B0C1Z96</div>
<div style="position:absolute;left:405.20px;top:1154.50px;width:119.80px;height:42.50px;box-sizing:border-box;background:#e4d7f4;border-radius:10px"></div>
<div class="t" style="left:450.50px;top:1165.62px;font-size:21px;line-height:21px;color:#5b5068;">HP</div>
<div class="t" style="left:553.60px;top:1166.68px;font-size:20.7px;line-height:20.7px;color:#2f343a;">HP Study</div>
<div class="t" style="left:718.80px;top:1166.68px;font-size:20.7px;line-height:20.7px;color:#2f343a;">16-e0350ax</div>
<div class="t" style="left:919.30px;top:1166.51px;font-size:20.9px;line-height:20.9px;color:#2f343a;">Laptop</div>
<div style="position:absolute;left:1065.50px;top:1156.70px;width:119.00px;height:38.40px;box-sizing:border-box;border:1.8px solid #e6e6e6;border-radius:7px;background:transparent"></div>
<div class="t" style="left:1084.93px;top:1167.16px;font-size:20.6px;line-height:20.6px;color:#e2962a;">Disabled</div>
<div style="position:absolute;left:1215.00px;top:1169.30px;width:33.30px;height:14.10px;box-sizing:border-box;border:2px solid #e3e3e3;border-radius:7px;background:#fff"></div>
<div style="position:absolute;left:1215.50px;top:1170.30px;width:24.97px;height:12.00px;box-sizing:border-box;background:#6cc419;border-radius:6px 0 0 6px"></div>
<div class="t" style="left:1254.50px;top:1168.19px;font-size:19.5px;line-height:19.5px;color:#2f343a;">75%</div>
<div class="t" style="left:1373.00px;top:1167.00px;font-size:21.5px;line-height:21.5px;color:#2f343a;">16/07/24</div>
<div class="t" style="left:1539.50px;top:1167.00px;font-size:21.5px;line-height:21.5px;color:#2f343a;">16/07/24</div>
<div class="t" style="left:1775.00px;top:1165.58px;font-size:22px;line-height:22px;color:#2f343a;">N/A</div>
<div class="t" style="left:1964.00px;top:1165.58px;font-size:22px;line-height:22px;color:#2f343a;">N/A</div>
<div style="position:absolute;left:0.00px;top:1229.35px;width:2560.00px;height:106.65px;box-sizing:border-box;background:#fff;border-bottom:2px solid #dfdee0"></div>
<div style="position:absolute;left:60.30px;top:1269.45px;width:26.30px;height:25.90px;box-sizing:border-box;border:2px solid #cbcbcb;border-radius:6px;background:transparent"></div>
<div style="position:absolute;left:133.30px;top:1242.65px;width:79.50px;height:79.50px;box-sizing:border-box;border:2px solid #d9d9d9;border-radius:10px;background:#fff"></div>
<svg style="position:absolute;left:133.60px;top:1242.85px" width="79" height="79" viewBox="0 0 79 79">
<rect x="10.85" y="18.25" width="58.99" height="39.79" rx="1.4" fill="#060606"/>
<g fill="none" stroke="#58585c" stroke-width="1.9" stroke-linecap="round" opacity=".95">
<path d="M12.4,21.8 L46.4,22.2 Q50.6,22.4 50.6,26 Q50.6,29.8 46.2,29.8 L26,29.9 Q15.6,30.4 15.4,40.5 L15.4,56.5"/>
<path d="M22.2,56.5 L22.2,40.4 Q22.4,36.6 26.6,36.6 L46.4,36.6 Q50.8,36.8 50.8,40.2 Q50.8,43.8 46.4,44 L32.8,44.3 Q29.4,44.4 29.4,47.8 Q29.6,51.8 33.2,51.9 L69,52.4"/>
<path d="M69,45.2 L61,45.2 Q57.3,45 57.2,41 L57.1,26.4 Q57.3,22.4 60.5,22.4 Q63.7,22.6 64.2,27 L64.6,32.8 Q65,36 67.5,37.5"/>
</g>
<rect x="5.56" y="57.78" width="69.05" height="2.54" rx="1.2" fill="#252527"/>
<rect x="34.92" y="57.94" width="10.58" height="0.74" fill="#555"/>
</svg>
<div class="t" style="left:264.60px;top:1273.50px;font-size:20.5px;line-height:20.5px;color:#2f343a;">B0CBKVM</div>
<div style="position:absolute;left:405.20px;top:1261.15px;width:119.80px;height:42.50px;box-sizing:border-box;background:#fce3e3;border-radius:10px"></div>
<div class="t" style="left:438.22px;top:1272.27px;font-size:21px;line-height:21px;color:#7d5f60;">Apple</div>
<div class="t" style="left:553.60px;top:1273.33px;font-size:20.7px;line-height:20.7px;color:#2f343a;">MacBook Pro</div>
<div class="t" style="left:718.80px;top:1273.33px;font-size:20.7px;line-height:20.7px;color:#2f343a;">MacBook Pro Grey</div>
<div class="t" style="left:919.30px;top:1273.16px;font-size:20.9px;line-height:20.9px;color:#2f343a;">Laptop</div>
<div style="position:absolute;left:1065.50px;top:1263.35px;width:119.00px;height:38.40px;box-sizing:border-box;border:1.8px solid #e6e6e6;border-radius:7px;background:transparent"></div>
<div class="t" style="left:1084.93px;top:1273.81px;font-size:20.6px;line-height:20.6px;color:#e2962a;">Disabled</div>
<div style="position:absolute;left:1215.00px;top:1275.95px;width:33.30px;height:14.10px;box-sizing:border-box;border:2px solid #e3e3e3;border-radius:7px;background:#fff"></div>
<div style="position:absolute;left:1215.50px;top:1276.95px;width:16.65px;height:12.00px;box-sizing:border-box;background:#e69c1e;border-radius:6px 0 0 6px"></div>
<div class="t" style="left:1254.50px;top:1274.84px;font-size:19.5px;line-height:19.5px;color:#2f343a;">50%</div>
<div class="t" style="left:1373.00px;top:1273.65px;font-size:21.5px;line-height:21.5px;color:#2f343a;">16/07/24</div>
<div class="t" style="left:1539.50px;top:1273.65px;font-size:21.5px;line-height:21.5px;color:#2f343a;">16/07/24</div>
<div class="t" style="left:1775.00px;top:1272.23px;font-size:22px;line-height:22px;color:#2f343a;">N/A</div>
<div class="t" style="left:1964.00px;top:1272.23px;font-size:22px;line-height:22px;color:#2f343a;">N/A</div>
<div style="position:absolute;left:0.00px;top:1336.00px;width:2560.00px;height:106.65px;box-sizing:border-box;background:#fff;border-bottom:2px solid #dfdee0"></div>
<div style="position:absolute;left:60.30px;top:1376.10px;width:26.30px;height:25.90px;box-sizing:border-box;border:2px solid #cbcbcb;border-radius:6px;background:transparent"></div>
<div style="position:absolute;left:133.30px;top:1349.30px;width:79.50px;height:79.50px;box-sizing:border-box;border:2px solid #d9d9d9;border-radius:10px;background:#fff"></div>
<svg style="position:absolute;left:133.60px;top:1349.50px" width="79" height="79" viewBox="0 0 79 79">
<rect x="10.85" y="15.08" width="58.99" height="36.51" rx="0.8" fill="#1d1d1f"/>
<rect x="11.90" y="16.93" width="57.14" height="32.01" fill="#b6c8da"/>
<path d="M20.63,46.56 Q17.46,37.04 22.22,31.75 Q23.81,23.28 33.86,22.22 Q43.39,15.87 52.38,22.22 Q56.08,28.04 51.85,31.75 Q62.43,32.80 60.32,42.33 Q57.14,47.62 46.56,47.62 Z" fill="#1f5fd8"/>
<path d="M22.22,32.80 Q27.51,27.51 33.86,29.63 L29.63,46.56 Q22.75,45.50 22.22,32.80 Z" fill="#3a8af0" opacity=".8"/>
<rect x="30.95" y="25.93" width="19.05" height="21.69" fill="#e6ecf6"/>
<rect x="62.70" y="40.74" width="4.50" height="4.76" fill="#2a62c0"/>
<polygon points="11.38,52.12 69.31,52.12 70.37,57.67 10.05,57.67" fill="#3a3a3c"/>
<polygon points="10.05,57.67 70.37,57.67 76.72,64.55 3.70,64.55" fill="#d9d9dc"/>
<polygon points="17.46,58.20 62.96,58.20 65.08,62.96 15.34,62.96" fill="#e6e6e8"/>
</svg>
<div class="t" style="left:264.60px;top:1380.15px;font-size:20.5px;line-height:20.5px;color:#2f343a;">B0BVW75</div>
<div style="position:absolute;left:405.20px;top:1367.80px;width:119.80px;height:42.50px;box-sizing:border-box;background:#e2e9fb;border-radius:10px"></div>
<div class="t" style="left:420.74px;top:1378.92px;font-size:21px;line-height:21px;color:#4d5a78;">Samsung</div>
<div class="t" style="left:553.60px;top:1379.98px;font-size:20.7px;line-height:20.7px;color:#2f343a;">Galaxy Book3</div>
<div class="t" style="left:718.80px;top:1379.98px;font-size:20.7px;line-height:20.7px;color:#2f343a;">Galaxy Book3</div>
<div class="t" style="left:919.30px;top:1379.81px;font-size:20.9px;line-height:20.9px;color:#2f343a;">Laptop</div>
<div style="position:absolute;left:1065.50px;top:1370.00px;width:119.00px;height:38.40px;box-sizing:border-box;border:1.8px solid #e6e6e6;border-radius:7px;background:transparent"></div>
<div class="t" style="left:1087.57px;top:1380.63px;font-size:20.4px;line-height:20.4px;color:#2e8331;">Enabled</div>
<div style="position:absolute;left:1215.00px;top:1382.60px;width:33.30px;height:14.10px;box-sizing:border-box;border:2px solid #e3e3e3;border-radius:7px;background:#fff"></div>
<div style="position:absolute;left:1215.50px;top:1383.60px;width:8.33px;height:12.00px;box-sizing:border-box;background:#e84d1d;border-radius:6px 0 0 6px"></div>
<div class="t" style="left:1254.50px;top:1381.49px;font-size:19.5px;line-height:19.5px;color:#2f343a;">25%</div>
<div class="t" style="left:1373.00px;top:1380.30px;font-size:21.5px;line-height:21.5px;color:#2f343a;">16/07/24</div>
<div class="t" style="left:1539.50px;top:1380.30px;font-size:21.5px;line-height:21.5px;color:#2f343a;">16/07/24</div>
<div class="t" style="left:1775.00px;top:1378.88px;font-size:22px;line-height:22px;color:#2f343a;">N/A</div>
<div class="t" style="left:1964.00px;top:1378.88px;font-size:22px;line-height:22px;color:#2f343a;">N/A</div>
<div style="position:absolute;left:0.00px;top:1442.65px;width:2560.00px;height:106.65px;box-sizing:border-box;background:#fff;border-bottom:2px solid #dfdee0"></div>
<div style="position:absolute;left:60.50px;top:1469.25px;width:25.70px;height:25.00px;box-sizing:border-box;border:1.5px solid #cdcdcd;border-radius:5px;background:#fff"></div>
<div style="position:absolute;left:60.50px;top:1496.05px;width:25.90px;height:26.20px;box-sizing:border-box;background:#714b67;border-radius:6px"></div>
<svg style="position:absolute;left:62.00px;top:1497.65px" width="24" height="22" viewBox="0 0 24 22"><polyline points="5,11.5 9.5,16 18.5,6.5" fill="none" stroke="#fff" stroke-width="2"/></svg>
<div style="position:absolute;left:133.30px;top:1455.95px;width:79.50px;height:79.50px;box-sizing:border-box;border:2px solid #d9d9d9;border-radius:10px;background:#fff"></div>
<svg style="position:absolute;left:133.60px;top:1456.15px" width="79" height="79" viewBox="0 0 79 79">
<defs>
<linearGradient id="vRed" x1="0" y1="0" x2="0" y2="1"><stop offset="0" stop-color="#e81c2a"/><stop offset=".55" stop-color="#a0207a"/><stop offset="1" stop-color="#1e4aa0"/></linearGradient>
<linearGradient id="vGrn" x1="0" y1="0" x2="0" y2="1"><stop offset="0" stop-color="#9ad84a"/><stop offset=".5" stop-color="#30b8a0"/><stop offset="1" stop-color="#2a70d0"/></linearGradient>
<linearGradient id="vYel" x1="1" y1="0" x2="0" y2="1"><stop offset="0" stop-color="#f07a1e"/><stop offset=".4" stop-color="#f4c020"/><stop offset="1" stop-color="#f2d00e"/></linearGradient>
</defs>
<rect x="15.87" y="19.31" width="48.41" height="31.75" fill="#1d2a40"/>
<polygon points="16.72,20.11 63.49,20.11 63.49,50.26 16.72,50.26" fill="#f2c41a"/>
<polygon points="16.72,20.11 32.80,20.11 23.28,28.04 16.72,33.33" fill="#3ab0ea"/>
<polygon points="23.28,28.04 32.80,20.11 41.27,20.63 34.92,40.21" fill="#f2cc4a"/>
<polygon points="16.72,33.33 23.28,28.04 34.39,46.03 16.72,50.00" fill="url(#vRed)"/>
<polygon points="40.21,20.90 48.15,23.81 39.15,45.50 34.39,46.03" fill="url(#vGrn)"/>
<polygon points="46.56,23.28 63.49,20.90 63.49,49.47 39.68,50.00 38.89,44.97" fill="url(#vYel)"/>
<polyline points="23.81,28.31 34.92,46.03 38.62,45.50 46.56,24.87 63.49,21.96" fill="none" stroke="#1b3a80" stroke-width="1.4"/>
<polygon points="15.87,51.06 64.02,51.06 72.22,59.79 8.47,59.79" fill="#c9ccd4"/>
<polygon points="15.87,51.06 64.02,51.06 65.08,52.65 14.81,52.65" fill="#dfe2e8"/>
</svg>
<div class="t" style="left:264.60px;top:1486.80px;font-size:20.5px;line-height:20.5px;color:#2f343a;">B0CNZ8Q</div>
<div style="position:absolute;left:405.20px;top:1474.45px;width:119.80px;height:42.50px;box-sizing:border-box;background:#fde7d5;border-radius:10px"></div>
<div class="t" style="left:441.74px;top:1485.57px;font-size:21px;line-height:21px;color:#6b5847;">Asus</div>
<div class="t" style="left:553.60px;top:1486.63px;font-size:20.7px;line-height:20.7px;color:#2f343a;">Vivobook</div>
<div class="t" style="left:718.80px;top:1486.63px;font-size:20.7px;line-height:20.7px;color:#2f343a;">ASUS Vivobook</div>
<div class="t" style="left:919.30px;top:1486.46px;font-size:20.9px;line-height:20.9px;color:#2f343a;">Laptop</div>
<div style="position:absolute;left:1065.50px;top:1476.65px;width:119.00px;height:38.40px;box-sizing:border-box;border:1.8px solid #e6e6e6;border-radius:7px;background:transparent"></div>
<div class="t" style="left:1087.57px;top:1487.28px;font-size:20.4px;line-height:20.4px;color:#2e8331;">Enabled</div>
<div style="position:absolute;left:1215.00px;top:1489.25px;width:33.30px;height:14.10px;box-sizing:border-box;border:2px solid #e3e3e3;border-radius:7px;background:#fff"></div>
<div style="position:absolute;left:1215.50px;top:1490.25px;width:24.97px;height:12.00px;box-sizing:border-box;background:#6cc419;border-radius:6px 0 0 6px"></div>
<div class="t" style="left:1254.50px;top:1488.14px;font-size:19.5px;line-height:19.5px;color:#2f343a;">75%</div>
<div class="t" style="left:1373.00px;top:1486.95px;font-size:21.5px;line-height:21.5px;color:#2f343a;">16/07/24</div>
<div class="t" style="left:1539.50px;top:1486.95px;font-size:21.5px;line-height:21.5px;color:#2f343a;">16/07/24</div>
<div class="t" style="left:1775.00px;top:1485.53px;font-size:22px;line-height:22px;color:#2f343a;">N/A</div>
<div class="t" style="left:1964.00px;top:1485.53px;font-size:22px;line-height:22px;color:#2f343a;">N/A</div>
<div style="position:absolute;left:42.00px;top:1549.00px;width:1988.50px;height:8.00px;box-sizing:border-box;background:#e3e3e3"></div>
<div style="position:absolute;left:43.00px;top:1549.20px;width:666.50px;height:7.00px;box-sizing:border-box;background:#999;border-radius:4px"></div>
</div></div>
<div style="position:absolute;left:2039.5px;top:198.5px;width:479.0px;height:1358.0px;box-sizing:border-box;border:1.5px solid #e0e0e0;border-radius:7px;overflow:hidden;background:#fff">
<div style="position:absolute;left:-2041.0px;top:-200.0px;width:2560px;height:1600px">
</div></div>
<div style="position:absolute;left:2039.50px;top:198.50px;width:479.00px;height:70.50px;box-sizing:border-box;background:#714a67;border-radius:6px 6px 0 0"></div>
<svg style="position:absolute;left:2063.70px;top:221.00px" width="22" height="26" viewBox="0 0 22 26"><line x1="0" y1="5" x2="22" y2="5" stroke="#fbe6f6" stroke-width="1.8"/><circle cx="15.5" cy="5" r="3" fill="#714a67" stroke="#fbe6f6" stroke-width="1.8"/>
<line x1="0" y1="12.5" x2="22" y2="12.5" stroke="#fbe6f6" stroke-width="1.8"/><circle cx="5" cy="12.5" r="3" fill="#714a67" stroke="#fbe6f6" stroke-width="1.8"/>
<line x1="0" y1="20" x2="22" y2="20" stroke="#fbe6f6" stroke-width="1.8"/><circle cx="12" cy="20" r="3" fill="#714a67" stroke="#fbe6f6" stroke-width="1.8"/></svg>
<div class="t" style="left:2100.00px;top:225.28px;font-size:20.7px;line-height:20.7px;color:#fbeaf7;font-weight:700;">Filter</div>
<svg style="position:absolute;left:2472.00px;top:224.00px" width="21" height="21" viewBox="0 0 21 21"><line x1="3" y1="3" x2="18" y2="18" stroke="#fff" stroke-width="2.4"/><line x1="18" y1="3" x2="3" y2="18" stroke="#fff" stroke-width="2.4"/></svg>
<div style="position:absolute;left:2039.5px;top:198.5px;width:479.0px;height:1358.0px;overflow:hidden;border-radius:7px">
<div style="position:absolute;left:-2039.5px;top:-198.5px;width:2560px;height:1600px">
<div class="t" style="left:2067.50px;top:302.42px;font-size:20.3px;line-height:20.3px;color:#1d2126;font-weight:700;">Family</div>
<div style="position:absolute;left:2467.00px;top:309.00px;width:21.00px;height:2.50px;box-sizing:border-box;background:#62666b;border-radius:1px"></div>
<div style="position:absolute;left:2045.50px;top:432.00px;width:466.30px;height:1.50px;box-sizing:border-box;background:#e6e6e6"></div>
<div class="t" style="left:2067.50px;top:475.72px;font-size:20.3px;line-height:20.3px;color:#1d2126;font-weight:700;">Product Typology</div>
<div style="position:absolute;left:2467.00px;top:482.00px;width:21.00px;height:2.50px;box-sizing:border-box;background:#62666b;border-radius:1px"></div>
<div style="position:absolute;left:2045.50px;top:605.30px;width:466.30px;height:1.50px;box-sizing:border-box;background:#e6e6e6"></div>
<div class="t" style="left:2067.50px;top:649.02px;font-size:20.3px;line-height:20.3px;color:#1d2126;font-weight:700;">Status</div>
<div style="position:absolute;left:2467.00px;top:655.00px;width:21.00px;height:2.50px;box-sizing:border-box;background:#62666b;border-radius:1px"></div>
<div style="position:absolute;left:2045.50px;top:778.60px;width:466.30px;height:1.50px;box-sizing:border-box;background:#e6e6e6"></div>
<div class="t" style="left:2067.50px;top:822.32px;font-size:20.3px;line-height:20.3px;color:#1d2126;font-weight:700;">Complete</div>
<div style="position:absolute;left:2467.00px;top:829.00px;width:21.00px;height:2.50px;box-sizing:border-box;background:#62666b;border-radius:1px"></div>
<div style="position:absolute;left:2045.50px;top:951.90px;width:466.30px;height:1.50px;box-sizing:border-box;background:#e6e6e6"></div>
<div class="t" style="left:2067.50px;top:995.62px;font-size:20.3px;line-height:20.3px;color:#1d2126;font-weight:700;">Created at</div>
<div style="position:absolute;left:2467.00px;top:1002.00px;width:21.00px;height:2.50px;box-sizing:border-box;background:#62666b;border-radius:1px"></div>
<div style="position:absolute;left:2056.60px;top:351.40px;width:444.00px;height:58.80px;box-sizing:border-box;border:1.5px solid #e2e2e2;border-radius:10px"></div>
<div class="t" style="left:2077.80px;top:373.02px;font-size:20.3px;line-height:20.3px;color:#9a9a9a;">Choose Family</div>
<svg style="position:absolute;left:2445.00px;top:371.00px" width="28" height="19" viewBox="0 0 28 19"><polyline points="3,3 13.5,14 24,3" fill="none" stroke="#1d2126" stroke-width="2.6"/></svg>
<div style="position:absolute;left:2056.60px;top:524.60px;width:66.40px;height:58.60px;box-sizing:border-box;border:1.5px solid #e2e2e2;border-radius:10px"></div>
<div class="t" style="left:2078.31px;top:545.88px;font-size:20.7px;line-height:20.7px;color:#8a8a8a;">All</div>
<div style="position:absolute;left:2135.30px;top:524.60px;width:132.10px;height:58.60px;box-sizing:border-box;border:1.5px solid #e2e2e2;border-radius:10px"></div>
<div class="t" style="left:2169.73px;top:545.88px;font-size:20.7px;line-height:20.7px;color:#8a8a8a;">Simple</div>
<div style="position:absolute;left:2279.00px;top:524.60px;width:132.40px;height:58.60px;box-sizing:border-box;border:1.5px solid #e2e2e2;border-radius:10px"></div>
<div class="t" style="left:2313.17px;top:545.88px;font-size:20.7px;line-height:20.7px;color:#8a8a8a;">Variant</div>
<div style="position:absolute;left:2056.60px;top:697.90px;width:66.40px;height:58.60px;box-sizing:border-box;border:1.5px solid #e2e2e2;border-radius:10px"></div>
<div class="t" style="left:2078.31px;top:719.18px;font-size:20.7px;line-height:20.7px;color:#8a8a8a;">All</div>
<div style="position:absolute;left:2135.20px;top:697.90px;width:158.60px;height:58.60px;box-sizing:border-box;border:1.5px solid #e2e2e2;border-radius:10px"></div>
<div class="t" style="left:2174.24px;top:719.18px;font-size:20.7px;line-height:20.7px;color:#8a8a8a;">Disabled</div>
<div style="position:absolute;left:2305.80px;top:697.90px;width:158.60px;height:58.60px;box-sizing:border-box;border:1.5px solid #e2e2e2;border-radius:10px"></div>
<div class="t" style="left:2347.12px;top:719.18px;font-size:20.7px;line-height:20.7px;color:#8a8a8a;">Enabled</div>
<div style="position:absolute;left:2056.60px;top:871.20px;width:66.40px;height:58.60px;box-sizing:border-box;border:1.5px solid #e2e2e2;border-radius:10px"></div>
<div class="t" style="left:2078.31px;top:892.48px;font-size:20.7px;line-height:20.7px;color:#8a8a8a;">All</div>
<div style="position:absolute;left:2135.20px;top:871.20px;width:132.30px;height:58.60px;box-sizing:border-box;border:1.5px solid #e2e2e2;border-radius:10px"></div>
<div class="t" style="left:2184.48px;top:892.48px;font-size:20.7px;line-height:20.7px;color:#8a8a8a;">Yes</div>
<div style="position:absolute;left:2278.90px;top:871.20px;width:132.60px;height:58.60px;box-sizing:border-box;border:1.5px solid #e2e2e2;border-radius:10px"></div>
<div class="t" style="left:2331.95px;top:892.48px;font-size:20.7px;line-height:20.7px;color:#8a8a8a;">No</div>
<div style="position:absolute;left:2066.90px;top:1053.30px;width:23.80px;height:23.80px;box-sizing:border-box;border:2px solid #714b67;border-radius:50%"></div>
<div style="position:absolute;left:2073.50px;top:1059.90px;width:10.60px;height:10.60px;box-sizing:border-box;background:#714b67;border-radius:50%"></div>
<div class="t" style="left:2102.00px;top:1054.79px;font-size:20.8px;line-height:20.8px;color:#24282d;">Between</div>
<div style="position:absolute;left:2256.20px;top:1053.30px;width:23.80px;height:23.80px;box-sizing:border-box;border:1.5px solid #cfcfcf;border-radius:50%"></div>
<div class="t" style="left:2291.40px;top:1054.79px;font-size:20.8px;line-height:20.8px;color:#24282d;">Not between</div>
<div style="position:absolute;left:2066.90px;top:1102.75px;width:23.80px;height:23.80px;box-sizing:border-box;border:1.5px solid #cfcfcf;border-radius:50%"></div>
<div class="t" style="left:2102.00px;top:1104.24px;font-size:20.8px;line-height:20.8px;color:#24282d;">More than</div>
<div style="position:absolute;left:2256.20px;top:1102.75px;width:23.80px;height:23.80px;box-sizing:border-box;border:1.5px solid #cfcfcf;border-radius:50%"></div>
<div class="t" style="left:2291.40px;top:1104.24px;font-size:20.8px;line-height:20.8px;color:#24282d;">Less than</div>
<div class="t" style="left:2056.70px;top:1147.68px;font-size:20.7px;line-height:20.7px;color:#575c62;">Select date range</div>
<div style="position:absolute;left:2056.70px;top:1181.90px;width:209.00px;height:58.80px;box-sizing:border-box;border:1.5px solid #e5e5e5;border-radius:10px"></div>
<svg style="position:absolute;left:2069.80px;top:1201.60px" width="21" height="21" viewBox="0 0 21 21"><rect x="1.2" y="3.5" width="18.5" height="15.5" rx="2" fill="none" stroke="#714b67" stroke-width="2"/><line x1="1.2" y1="8.5" x2="19.7" y2="8.5" stroke="#714b67" stroke-width="2"/><line x1="6" y1="0.5" x2="6" y2="5" stroke="#714b67" stroke-width="2"/><line x1="15" y1="0.5" x2="15" y2="5" stroke="#714b67" stroke-width="2"/></svg>
<div class="t" style="left:2099.00px;top:1201.88px;font-size:21.4px;line-height:21.4px;color:#9a9a9a;">08/13/2024</div>
<div style="position:absolute;left:2291.20px;top:1181.90px;width:209.50px;height:58.80px;box-sizing:border-box;border:1.5px solid #e5e5e5;border-radius:10px"></div>
<svg style="position:absolute;left:2304.30px;top:1201.60px" width="21" height="21" viewBox="0 0 21 21"><rect x="1.2" y="3.5" width="18.5" height="15.5" rx="2" fill="none" stroke="#714b67" stroke-width="2"/><line x1="1.2" y1="8.5" x2="19.7" y2="8.5" stroke="#714b67" stroke-width="2"/><line x1="6" y1="0.5" x2="6" y2="5" stroke="#714b67" stroke-width="2"/><line x1="15" y1="0.5" x2="15" y2="5" stroke="#714b67" stroke-width="2"/></svg>
<div class="t" style="left:2333.60px;top:1201.88px;font-size:21.4px;line-height:21.4px;color:#9a9a9a;">08/13/2024</div>
<div style="position:absolute;left:2271.70px;top:1209.50px;width:13.50px;height:2.20px;box-sizing:border-box;background:#333"></div>
<div style="position:absolute;left:2045.50px;top:1252.10px;width:466.20px;height:52.90px;box-sizing:border-box;border:1.7px solid #4caf50;border-radius:12px"></div>
<div class="t" style="left:2243.63px;top:1269.70px;font-size:21.5px;line-height:21.5px;color:#44a047;">Update</div>
<div style="position:absolute;left:2045.50px;top:1327.00px;width:466.30px;height:1.50px;box-sizing:border-box;background:#e6e6e6"></div>
<div class="t" style="left:2067.50px;top:1369.82px;font-size:20.3px;line-height:20.3px;color:#1d2126;font-weight:700;">Updated at</div>
<div style="position:absolute;left:2467.00px;top:1377.00px;width:21.00px;height:2.50px;box-sizing:border-box;background:#62666b;border-radius:1px"></div>
<div style="position:absolute;left:2066.90px;top:1428.20px;width:23.80px;height:23.80px;box-sizing:border-box;border:2px solid #714b67;border-radius:50%"></div>
<div style="position:absolute;left:2073.50px;top:1434.80px;width:10.60px;height:10.60px;box-sizing:border-box;background:#714b67;border-radius:50%"></div>
<div class="t" style="left:2102.00px;top:1429.69px;font-size:20.8px;line-height:20.8px;color:#24282d;">Between</div>
<div style="position:absolute;left:2256.20px;top:1428.20px;width:23.80px;height:23.80px;box-sizing:border-box;border:1.5px solid #cfcfcf;border-radius:50%"></div>
<div class="t" style="left:2291.40px;top:1429.69px;font-size:20.8px;line-height:20.8px;color:#24282d;">Not between</div>
<div style="position:absolute;left:2066.90px;top:1477.65px;width:23.80px;height:23.80px;box-sizing:border-box;border:1.5px solid #cfcfcf;border-radius:50%"></div>
<div class="t" style="left:2102.00px;top:1479.14px;font-size:20.8px;line-height:20.8px;color:#24282d;">More than</div>
<div style="position:absolute;left:2256.20px;top:1477.65px;width:23.80px;height:23.80px;box-sizing:border-box;border:1.5px solid #cfcfcf;border-radius:50%"></div>
<div class="t" style="left:2291.40px;top:1479.14px;font-size:20.8px;line-height:20.8px;color:#24282d;">Less than</div>
<div class="t" style="left:2056.70px;top:1522.58px;font-size:20.7px;line-height:20.7px;color:#575c62;">Select date range</div>
</div></div>
</body></html>
